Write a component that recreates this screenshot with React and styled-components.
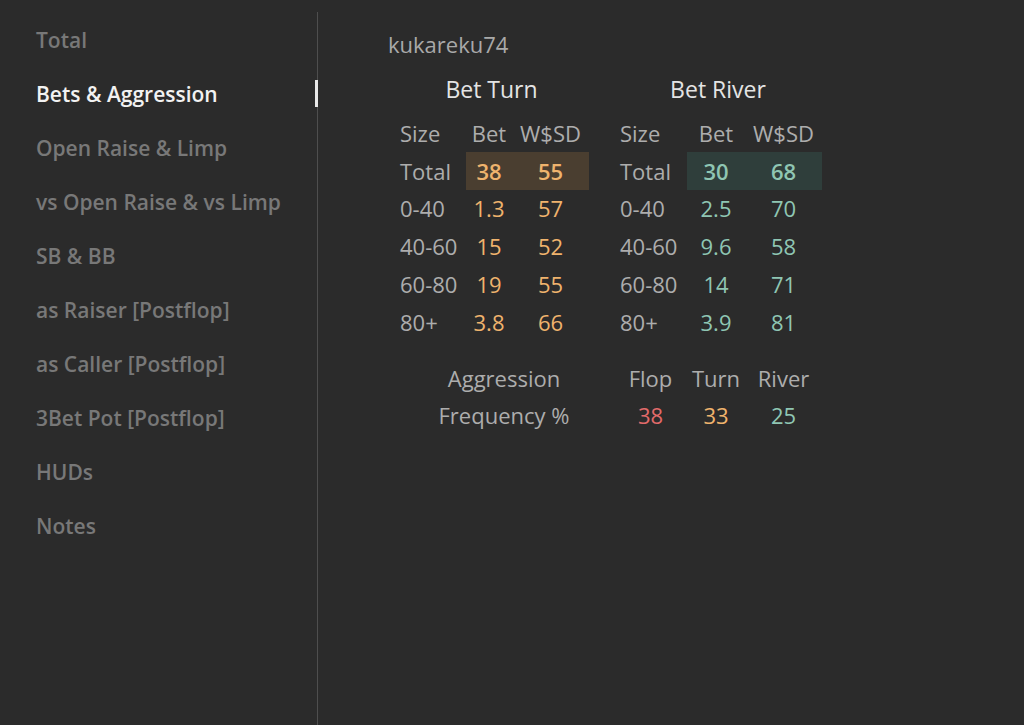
import React from "react";
import styled, { createGlobalStyle } from "styled-components";

const Global = createGlobalStyle`
  html, body { margin: 0; padding: 0; background: #2b2b2b; }
  body { font-family: "Open Sans", "Noto Sans", sans-serif; }
  #root { min-height: 725px; }
`;

const Page = styled.div`
  display: flex;
  height: 725px;
  background: #2b2b2b;
  overflow: hidden;
`;

const Sidebar = styled.nav`
  width: 318px;
  margin-top: 12px;
  border-right: 1px solid #4e4e4e;
  padding-top: 1px;
  box-sizing: border-box;
  display: flex;
  flex-direction: column;
`;

const NavItem = styled.div`
  position: relative;
  height: 54px;
  display: flex;
  align-items: center;
  padding-left: 36px;
  font-size: 21px;
  font-weight: 600;
  white-space: nowrap;
  color: ${(p) => (p.$active ? "#f2f2f2" : "#787878")};
  &::after {
    content: "";
    display: ${(p) => (p.$active ? "block" : "none")};
    position: absolute;
    right: -1px;
    top: 13px;
    width: 3px;
    height: 27px;
    background: #e8e8e8;
  }
`;

const Main = styled.main`
  flex: 1;
  padding: 30px 0 0 70px;
`;

const PlayerName = styled.div`
  font-size: 22px;
  line-height: 28px;
  color: #a9a9a9;
`;

const Tables = styled.div`
  display: flex;
  gap: 25px;
  margin: 15px 0 0 6px;
`;

const StatTable = styled.div`
  display: flex;
  flex-direction: column;
`;

const TableTitle = styled.div`
  text-align: center;
  font-size: 23px;
  line-height: 32px;
  color: #e4e4e4;
  margin-bottom: 9px;
`;

const Grid = styled.div`
  display: grid;
  grid-template-columns: ${(p) => p.$cols};
  grid-auto-rows: 37.8px;
`;

const Cell = styled.div`
  display: flex;
  align-items: center;
  justify-content: ${(p) => (p.$left ? "flex-start" : "center")};
  padding-left: ${(p) => (p.$left ? "6px" : "0")};
  font-size: 22px;
  white-space: nowrap;
  color: ${(p) => p.$color || "#adadad"};
  font-weight: ${(p) => (p.$bold ? 600 : 400)};
  background: ${(p) => p.$bg || "transparent"};
`;

const Aggression = styled.div`
  display: grid;
  grid-template-columns: 220px 73px 58px 77px;
  grid-auto-rows: 37.8px;
  margin: 18px 0 0 6px;
`;

const ORANGE = "#efb36d";
const TEAL = "#8fc6b3";
const RED = "#e26a6a";

const nav = [
  "Total",
  "Bets & Aggression",
  "Open Raise & Limp",
  "vs Open Raise & vs Limp",
  "SB & BB",
  "as Raiser [Postflop]",
  "as Caller [Postflop]",
  "3Bet Pot [Postflop]",
  "HUDs",
  "Notes",
];

const turn = {
  title: "Bet Turn",
  cols: "72px 46px 77px",
  color: ORANGE,
  bg: "#4a3e30",
  total: ["38", "55"],
  rows: [
    ["0-40", "1.3", "57"],
    ["40-60", "15", "52"],
    ["60-80", "19", "55"],
    ["80+", "3.8", "66"],
  ],
};

const river = {
  title: "Bet River",
  cols: "73px 58px 77px",
  color: TEAL,
  bg: "#2f3e3b",
  total: ["30", "68"],
  rows: [
    ["0-40", "2.5", "70"],
    ["40-60", "9.6", "58"],
    ["60-80", "14", "71"],
    ["80+", "3.9", "81"],
  ],
};

function Table({ data }) {
  return (
    <StatTable>
      <TableTitle>{data.title}</TableTitle>
      <Grid $cols={data.cols}>
        <Cell $left>Size</Cell>
        <Cell>Bet</Cell>
        <Cell>W$SD</Cell>
        <Cell $left>Total</Cell>
        <Cell $color={data.color} $bg={data.bg} $bold>
          {data.total[0]}
        </Cell>
        <Cell $color={data.color} $bg={data.bg} $bold>
          {data.total[1]}
        </Cell>
        {data.rows.map((r) => (
          <React.Fragment key={r[0]}>
            <Cell $left>{r[0]}</Cell>
            <Cell $color={data.color}>{r[1]}</Cell>
            <Cell $color={data.color}>{r[2]}</Cell>
          </React.Fragment>
        ))}
      </Grid>
    </StatTable>
  );
}

export default function App() {
  return (
    <>
      <Global />
      <Page>
        <Sidebar>
          {nav.map((n) => (
            <NavItem key={n} $active={n === "Bets & Aggression"}>
              {n}
            </NavItem>
          ))}
        </Sidebar>
        <Main>
          <PlayerName>kukareku74</PlayerName>
          <Tables>
            <Table data={turn} />
            <Table data={river} />
          </Tables>
          <Aggression>
            <Cell>Aggression</Cell>
            <Cell>Flop</Cell>
            <Cell>Turn</Cell>
            <Cell>River</Cell>
            <Cell>Frequency %</Cell>
            <Cell $color={RED}>38</Cell>
            <Cell $color={ORANGE}>33</Cell>
            <Cell $color={TEAL}>25</Cell>
          </Aggression>
        </Main>
      </Page>
    </>
  );
}
